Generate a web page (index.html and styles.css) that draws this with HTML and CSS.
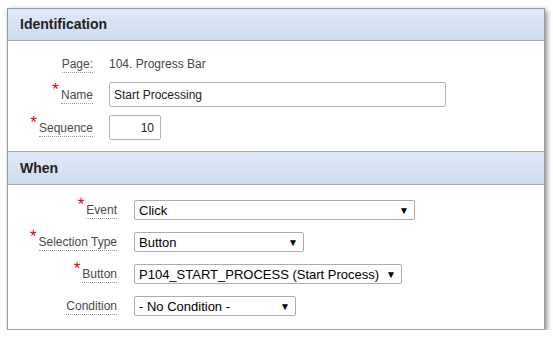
FILE: index.html
```html
<!DOCTYPE html>
<html lang="en">
<head>
<meta charset="UTF-8">
<title>Dynamic Action</title>
<link rel="stylesheet" href="styles.css">
</head>
<body>

<div class="panel">
    <div class="section-head">Identification</div>
    <div class="section-body ident">
        <div class="row first">
            <span class="label"><span class="lbl">Page:</span></span>
            <span class="value">104. Progress Bar</span>
        </div>
        <div class="row">
            <span class="label"><span class="req">*</span><span class="lbl">Name</span></span>
            <input type="text" class="text name" value="Start Processing">
        </div>
        <div class="row">
            <span class="label"><span class="req">*</span><span class="lbl">Sequence</span></span>
            <input type="text" class="text seq" value="10">
        </div>
    </div>

    <div class="section-head when">When</div>
    <div class="section-body whenbody">
        <div class="row">
            <span class="label"><span class="req">*</span><span class="lbl">Event</span></span>
            <div class="select sel-event"><span>Click</span><span class="arrow">&#9660;</span></div>
        </div>
        <div class="row">
            <span class="label"><span class="req">*</span><span class="lbl">Selection Type</span></span>
            <div class="select sel-type"><span>Button</span><span class="arrow">&#9660;</span></div>
        </div>
        <div class="row">
            <span class="label"><span class="req">*</span><span class="lbl">Button</span></span>
            <div class="select sel-button"><span>P104_START_PROCESS (Start Process)</span><span class="arrow">&#9660;</span></div>
        </div>
        <div class="row">
            <span class="label"><span class="lbl">Condition</span></span>
            <div class="select sel-cond"><span>- No Condition -</span><span class="arrow">&#9660;</span></div>
        </div>
    </div>
</div>

</body>
</html>
```

FILE: styles.css
```css
body {
    margin: 0;
    padding: 8px 0 0 7px;
    background: #ffffff;
    font-family: "Liberation Sans", Arial, sans-serif;
}
.panel {
    width: 536px;
    height: 320px;
    border: 1px solid #9a9a9a;
    background: #ffffff;
    box-shadow: 2px 2px 5px rgba(0, 0, 0, 0.45);
}
.section-head {
    height: 31px;
    line-height: 31px;
    padding-left: 12px;
    background: linear-gradient(#dfe9f8, #cddcef);
    border-bottom: 1px solid #a9a9a9;
    font-size: 14px;
    font-weight: bold;
    color: #222;
}
.section-head.when {
    height: 32px;
    line-height: 32px;
    border-top: 1px solid #a9a9a9;
}
.section-body {
    display: flex;
    flex-direction: column;
}
.ident {
    height: 110px;
    padding-top: 8px;
    gap: 8px;
    box-sizing: border-box;
}
.ident .label {
    width: 85px;
}
.ident .row {
    height: 25px;
}
.ident .row.first {
    margin-top: 2px;
    margin-bottom: -2px;
}
.whenbody {
    padding-top: 15px;
    gap: 12px;
}
.whenbody .label {
    width: 109px;
    margin-right: 17px;
}
.whenbody .row {
    height: 20px;
}
.row {
    display: flex;
    align-items: center;
}
.label {
    text-align: right;
    font-size: 12px;
    color: #4a4a4a;
    margin-right: 16px;
    flex-shrink: 0;
}
.lbl {
    border-bottom: 1px dotted #999;
    padding-bottom: 1px;
}
.req {
    color: #e00000;
    font-size: 17px;
    line-height: 10px;
    position: relative;
    top: -4px;
    margin-right: 2px;
}
.value {
    font-size: 12px;
    color: #444;
}
.text {
    height: 25px;
    box-sizing: border-box;
    border: 1px solid #b4b4b4;
    border-radius: 2px;
    padding: 0 4px;
    font-family: "Liberation Sans", Arial, sans-serif;
    font-size: 12px;
    color: #222;
    margin: 0;
}
.name {
    width: 337px;
}
.seq {
    width: 52px;
    text-align: right;
    padding-right: 6px;
}
.select {
    height: 20px;
    box-sizing: border-box;
    border: 1px solid #acacac;
    border-radius: 2px;
    display: flex;
    align-items: center;
    justify-content: space-between;
    padding: 0 5px 0 4px;
    font-size: 13px;
    color: #000;
}
.arrow {
    font-size: 10px;
}
.sel-event {
    width: 281px;
}
.sel-type {
    width: 170px;
}
.sel-button {
    width: 268px;
}
.sel-cond {
    width: 162px;
}
```
